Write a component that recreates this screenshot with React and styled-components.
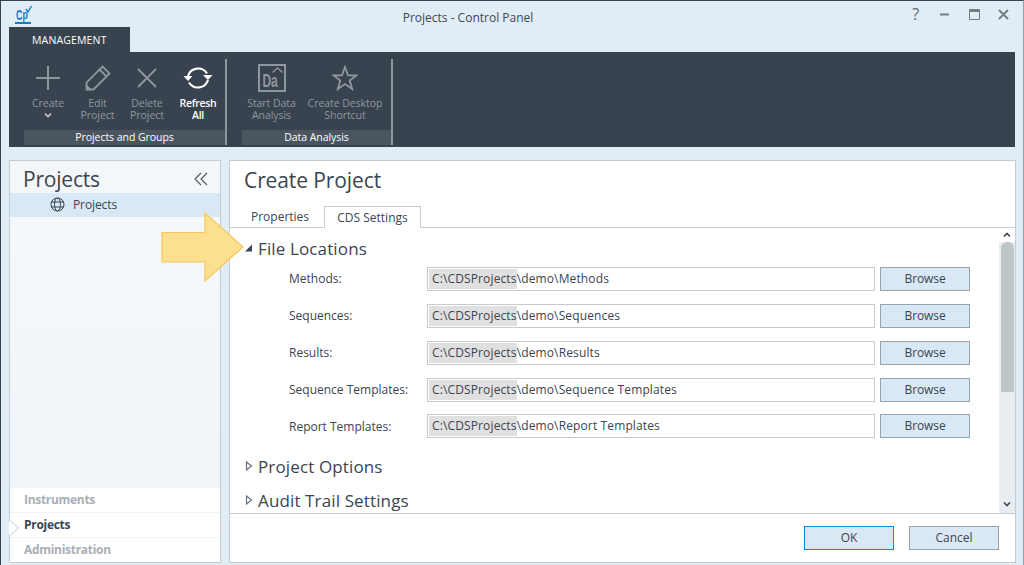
import React from "react";
import styled, { createGlobalStyle } from "styled-components";

const FONT = `"Open Sans", "Noto Sans", "Liberation Sans", sans-serif`;

const Global = createGlobalStyle`
  html, body { margin: 0; padding: 0; width: 1024px; height: 565px; overflow: hidden; background: #e1edf5; }
  * { box-sizing: border-box; }
`;

const Win = styled.div`
  position: relative;
  width: 1024px;
  height: 565px;
  overflow: hidden;
  display: flex;
  flex-direction: column;
  background: #e1edf5;
  border-top: 1px solid #38434f;
  border-left: 1px solid #38434f;
  border-right: 1px solid #8fa0ae;
  font-family: ${FONT};
  color: #3a4552;
`;
const TitleBar = styled.div`
  height: 26px;
  flex: none;
  display: flex;
  align-items: center;
  padding-left: 14px;
`;
const Caption = styled.div`
  width: 866px;
  padding-top: 6px;
  text-align: center;
  font-size: 12px;
  color: #3c4753;
`;
const WinButtons = styled.div`
  display: flex;
  align-items: center;
`;
const WinBtn = styled.div`
  width: 29.4px;
  height: 20px;
  display: flex;
  align-items: center;
  justify-content: center;
  color: ${(p) => p.$color || "#6f7a84"};
  font-size: 16px;
`;
const TabStrip = styled.div`
  height: 25px;
  flex: none;
  padding-left: 8px;
`;
const RibbonTab = styled.div`
  width: 121px;
  height: 25px;
  background: #38434f;
  color: #fff;
  font-size: 10.5px;
  line-height: 26px;
  letter-spacing: 0.15px;
  padding-left: 23px;
`;
const Ribbon = styled.div`
  margin-left: 8px;
  width: 1006px;
  height: 95px;
  flex: none;
  background: #38434f;
  padding: 7px 0 0 15px;
  display: flex;
  gap: 15px;
`;
const Group = styled.div`
  display: flex;
  flex-direction: column;
  width: ${(p) => p.$w}px;
  height: 86px;
  border-right: 2px solid #8f979f;
`;
const GroupButtons = styled.div`
  display: flex;
  height: 71px;
  margin-left: ${(p) => p.$ml || 0}px;
`;
const RBtn = styled.div`
  width: ${(p) => p.$w}px;
  flex: none;
  display: flex;
  flex-direction: column;
  align-items: center;
  color: ${(p) => (p.$on ? "#ffffff" : "#8f979f")};
  font-weight: ${(p) => (p.$on ? 600 : 400)};
  font-size: 10.5px;
  line-height: 12px;
  letter-spacing: ${(p) => (p.$on ? "-0.3px" : "-0.05px")};
  text-align: center;
`;
const RIcon = styled.div`
  height: 37px;
  width: 100%;
  display: flex;
  align-items: center;
  justify-content: center;
  margin-bottom: 1px;
  flex: none;
`;
const Chevron = styled.svg`
  margin-top: 3px;
`;
const GroupLabel = styled.div`
  height: 15px;
  background: #4a5560;
  color: #fff;
  font-size: 10.5px;
  letter-spacing: -0.05px;
  line-height: 15px;
  text-align: center;
`;
const Main = styled.div`
  display: flex;
  gap: 8px;
  margin: 13px 0 0 8px;
  height: 403px;
  flex: none;
`;
const Side = styled.div`
  width: 212px;
  flex: none;
  border: 1px solid #c3ccd2;
  background: #fff;
  display: flex;
  flex-direction: column;
  position: relative;
`;
const SideHead = styled.div`
  height: 32px;
  flex: none;
  display: flex;
  align-items: center;
  justify-content: space-between;
  padding: 4px 12px 0 13px;
  font-size: 21px;
  letter-spacing: -0.2px;
  background: #f3f7fa;
`;
const TreeRow = styled.div`
  height: 24px;
  flex: none;
  background: #d8e8f4;
  display: flex;
  align-items: center;
  gap: 8px;
  padding: 0 0 2px 40px;
  font-size: 12px;
  letter-spacing: -0.1px;
`;
const TreeFill = styled.div`
  flex: 1;
  background: linear-gradient(180deg, #f5f8fb 0%, #f0f5f9 100%);
`;
const NavRow = styled.div`
  height: ${(p) => (p.$last ? 24 : 25)}px;
  flex: none;
  display: flex;
  align-items: center;
  padding: 0 0 2px 14px;
  border-bottom: ${(p) => (p.$last ? "none" : "1px solid #edf3f7")};
  font-size: 12px;
  font-weight: 700;
  letter-spacing: -0.3px;
  color: ${(p) => (p.$on ? "#3a4552" : "#a9afb5")};
`;
const NavMark = styled.svg`
  position: absolute;
  left: -1px;
  top: 359px;
`;
const Panel = styled.div`
  width: 787px;
  flex: none;
  border: 1px solid #c3ccd2;
  background: #fff;
  display: flex;
  flex-direction: column;
`;
const PanelTitle = styled.div`
  height: 45px;
  flex: none;
  padding: 2px 0 0 14px;
  font-size: 21px;
  line-height: 34px;
  letter-spacing: -0.1px;
`;
const Tabs = styled.div`
  height: 22px;
  flex: none;
  display: flex;
  padding-left: 10px;
  border-bottom: 1px solid #c3ccd2;
  font-size: 12px;
`;
const Tab = styled.div`
  height: ${(p) => (p.$on ? 22 : 21)}px;
  width: ${(p) => p.$w}px;
  margin-right: ${(p) => (p.$on ? 0 : 4)}px;
  text-align: center;
  line-height: 21px;
  background: #fff;
  ${(p) => p.$on && "border: 1px solid #c3ccd2; border-bottom: none;"}
`;
const Body = styled.div`
  height: 285px;
  flex: none;
  display: flex;
  overflow: hidden;
`;
const Scroll = styled.div`
  flex: 1;
  padding: 7px 0 0 15px;
`;
const SectionHead = styled.div`
  display: flex;
  align-items: center;
  gap: 5px;
  height: 26px;
  font-size: 17px;
  letter-spacing: 0.13px;
  margin-top: ${(p) => p.$mt || 0}px;
`;
const Rows = styled.div`
  padding-top: 6px;
  display: flex;
  flex-direction: column;
`;
const Label = styled.div`
  width: 138px;
  flex: none;
  padding-bottom: 2px;
`;
const Input = styled.div`
  width: 448px;
  height: 24px;
  flex: none;
  border: 1px solid #c3ccd2;
  padding: 1px 0 0 1px;
  line-height: 20px;
  white-space: nowrap;
  letter-spacing: 0.13px;
`;
const Sel = styled.span`
  display: inline-block;
  background: #e0e0e0;
  height: 20px;
  padding-left: 3px;
`;
const Browse = styled.div`
  width: 90px;
  height: 24px;
  flex: none;
  margin-left: 5px;
  background: #d8e8f5;
  border: 1px solid #9aa2a9;
  text-align: center;
  line-height: 21px;
  letter-spacing: -0.1px;
`;
const Row = styled.div`
  display: flex;
  align-items: center;
  height: 24px;
  margin-bottom: 13px;
  padding-left: 44px;
  font-size: 12px;
  &:nth-child(4) { margin-bottom: 12px; }
  &:last-child { margin-bottom: 0; }
  &:last-child ${Label} { padding-bottom: 0; }
  &:last-child ${Browse} { line-height: 22px; }
`;
const ScrollBar = styled.div`
  width: 16px;
  flex: none;
  display: flex;
  flex-direction: column;
  align-items: center;
  background: linear-gradient(#fff 0, #fff 14px, #e8edf1 14px, #e8edf1 100%);
`;
const SArrow = styled.svg`
  flex: none;
  margin-top: ${(p) => p.$mt}px;
`;
const Thumb = styled.div`
  width: 13px;
  height: 150px;
  margin-top: 4px;
  background: #bfc6ca;
  border-radius: 6px 6px 0 0;
`;
const Footer = styled.div`
  flex: 1;
  border-top: 1px solid #c3ccd2;
  display: flex;
  justify-content: flex-end;
  gap: 15px;
  padding: 12px 16px 0 0;
`;
const FootBtn = styled.div`
  width: 90px;
  height: 24px;
  background: #dae8f5;
  border: 1px solid ${(p) => (p.$def ? "#0d86d8" : "#9aa2a9")};
  text-align: center;
  line-height: 21px;
  font-size: 12px;
`;
const Callout = styled.svg`
  position: absolute;
  left: 158px;
  top: 209px;
`;
const Logo = styled.svg`
  flex: none;
  overflow: visible;
`;

const stroke = { fill: "none", stroke: "#8f979f" };

const Tri = ({ open }) => (
  <svg width="8" height="10" viewBox="0 0 8 10">
    {open ? (
      <path d="M0 8.5H7V1.5Z" fill="#3a4552" />
    ) : (
      <path d="M1.5 1L6.5 5L1.5 9Z" fill="#fff" stroke="#68727c" strokeWidth="1.2" />
    )}
  </svg>
);

const rows = [
  ["Methods:", "Methods"],
  ["Sequences:", "Sequences"],
  ["Results:", "Results"],
  ["Sequence Templates:", "Sequence Templates"],
  ["Report Templates:", "Report Templates"],
];

export default function App() {
  return (
    <Win>
      <Global />
      <TitleBar>
        <Logo width="20" height="20" viewBox="0 0 20 20">
          <g fontFamily="Liberation Sans, sans-serif" fontWeight="700" fontSize="11" fill="#1578c8">
            <text transform="translate(1 16) scale(0.8 1.25)">C</text>
            <text transform="translate(7.5 14.5) scale(0.8 1.15)">p</text>
          </g>
          <path d="M11 5L13 8L16.5 2" fill="none" stroke="#1578c8" strokeWidth="1.4" />
          <rect x="0" y="18" width="16" height="2" fill="#1578c8" />
        </Logo>
        <Caption>Projects - Control Panel</Caption>
        <WinButtons>
          <WinBtn $color="#5e6a75">?</WinBtn>
          <WinBtn>
            <svg width="10" height="3" viewBox="0 0 10 3"><rect width="9" height="2" y="0.5" fill="#767e85" /></svg>
          </WinBtn>
          <WinBtn>
            <svg width="11" height="11" viewBox="0 0 11 11"><path d="M.5 .5H10.5V10.5H.5Z M.5 2.5H10.5" fill="none" stroke="#767e85" /><rect width="10" height="2" x=".5" y=".5" fill="#767e85" /></svg>
          </WinBtn>
          <WinBtn>
            <svg width="11" height="11" viewBox="0 0 11 11"><path d="M1 1L10 10M10 1L1 10" fill="none" stroke="#767e85" strokeWidth="2" /></svg>
          </WinBtn>
        </WinButtons>
      </TitleBar>
      <TabStrip><RibbonTab>MANAGEMENT</RibbonTab></TabStrip>
      <Ribbon>
        <Group $w={203}>
          <GroupButtons $ml={-1}>
            <RBtn $w={50}>
              <RIcon>
                <svg width="26" height="26" viewBox="0 0 26 26"><path d="M13 1V25M1 13H25" {...stroke} strokeWidth="2" /></svg>
              </RIcon>
              <span>Create</span>
              <Chevron width="8" height="6" viewBox="0 0 8 6"><path d="M1 1.5L4 4.5L7 1.5" fill="none" stroke="#c8ccd0" strokeWidth="1.6" /></Chevron>
            </RBtn>
            <RBtn $w={49}>
              <RIcon>
                <svg width="26" height="26" viewBox="0 0 26 26"><path d="M1.5 24.5V17.5L17.5 1.5L24.5 8.5L8.5 24.5ZM14.5 4.5L21.5 11.5" {...stroke} strokeWidth="1.8" /><path d="M1.5 24.5V19.5L6.5 24.5Z" fill="#8f979f" /></svg>
              </RIcon>
              <span>Edit<br />Project</span>
            </RBtn>
            <RBtn $w={50}>
              <RIcon>
                <svg width="22" height="22" viewBox="0 0 22 22"><path d="M2 2L20 20M20 2L2 20" {...stroke} strokeWidth="1.8" /></svg>
              </RIcon>
              <span>Delete<br />Project</span>
            </RBtn>
            <RBtn $w={52} $on>
              <RIcon>
                <svg width="30" height="26" viewBox="0 0 30 26">
                  <path d="M5 11A10.5 10.5 0 0 1 24 8.5M25 15A10.5 10.5 0 0 1 6 17.5" fill="none" stroke="#fff" strokeWidth="2.2" />
                  <path d="M0.5 11H9.5L5 16Z M20 10H29.5L25 15Z" fill="#fff" />
                </svg>
              </RIcon>
              <span>Refresh<br />All</span>
            </RBtn>
          </GroupButtons>
          <GroupLabel>Projects and Groups</GroupLabel>
        </Group>
        <Group $w={151}>
          <GroupButtons>
            <RBtn $w={59}>
              <RIcon>
                <svg width="28" height="28" viewBox="0 0 28 28">
                  <rect x="1" y="1" width="26" height="26" fill="none" stroke="#8f979f" strokeWidth="2" />
                  <text transform="translate(4.5 22.5) scale(0.8 1.2)" fontFamily="Liberation Sans, sans-serif" fontWeight="700" fontSize="15" fill="#8f979f">Da</text>
                  <path d="M14.5 8.5L19.5 4L24.5 8.5" fill="none" stroke="#8f979f" strokeWidth="1.4" />
                </svg>
              </RIcon>
              <span>Start Data<br />Analysis</span>
            </RBtn>
            <RBtn $w={88}>
              <RIcon>
                <svg width="26" height="26" viewBox="0 0 26 26"><path d="M13 2L16 10.3H24.6L17.7 15.6L20.2 24L13 19L5.8 24L8.3 15.6L1.4 10.3H10Z" {...stroke} strokeWidth="1.8" /></svg>
              </RIcon>
              <span>Create Desktop<br />Shortcut</span>
            </RBtn>
          </GroupButtons>
          <GroupLabel>Data Analysis</GroupLabel>
        </Group>
      </Ribbon>
      <Main>
        <Side>
          <SideHead>
            <span>Projects</span>
            <svg width="14" height="14" viewBox="0 0 14 14"><path d="M7 1L1 7L7 13M13 1L7 7L13 13" fill="none" stroke="#4a5560" strokeWidth="1.1" /></svg>
          </SideHead>
          <TreeRow>
            <svg width="15" height="15" viewBox="0 0 15 15"><g fill="none" stroke="#3a4552" strokeWidth="1"><circle cx="7.5" cy="7.5" r="6.5" /><ellipse cx="7.5" cy="7.5" rx="3" ry="6.5" /><path d="M1 5H14M1 10H14" /></g></svg>
            <span>Projects</span>
          </TreeRow>
          <TreeFill />
          <NavRow>Instruments</NavRow>
          <NavRow $on>Projects</NavRow>
          <NavRow $last>Administration</NavRow>
          <NavMark width="12" height="16" viewBox="0 0 12 16"><path d="M0 0L10 8L0 16" fill="#fff" stroke="#c3ccd2" /></NavMark>
        </Side>
        <Panel>
          <PanelTitle>Create Project</PanelTitle>
          <Tabs>
            <Tab $w={80}>Properties</Tab>
            <Tab $w={97} $on>CDS Settings</Tab>
          </Tabs>
          <Body>
            <Scroll>
              <SectionHead><Tri open /> File Locations</SectionHead>
              <Rows>
                {rows.map(([l, v]) => (
                  <Row key={l}>
                    <Label>{l}</Label>
                    <Input><Sel>C:\CDSProjects</Sel>\demo\{v}</Input>
                    <Browse>Browse</Browse>
                  </Row>
                ))}
              </Rows>
              <SectionHead $mt={15}><Tri /> Project Options</SectionHead>
              <SectionHead $mt={8}><Tri /> Audit Trail Settings</SectionHead>
            </Scroll>
            <ScrollBar>
              <SArrow $mt={4} width="8" height="6" viewBox="0 0 8 6"><path d="M1 4.5L4 1.5L7 4.5" fill="none" stroke="#3a4552" strokeWidth="1.6" /></SArrow>
              <Thumb />
              <SArrow $mt={109} width="8" height="6" viewBox="0 0 8 6"><path d="M1 1.5L4 4.5L7 1.5" fill="none" stroke="#3a4552" strokeWidth="1.6" /></SArrow>
            </ScrollBar>
          </Body>
          <Footer>
            <FootBtn $def>OK</FootBtn>
            <FootBtn>Cancel</FootBtn>
          </Footer>
        </Panel>
      </Main>
      <Callout width="86" height="74" viewBox="0 0 86 74">
        <path d="M3 22.5H46V3L84 37L46 71V52H3Z" fill="#fde08f" stroke="#f8c65a" strokeWidth="1.2" />
      </Callout>
    </Win>
  );
}
